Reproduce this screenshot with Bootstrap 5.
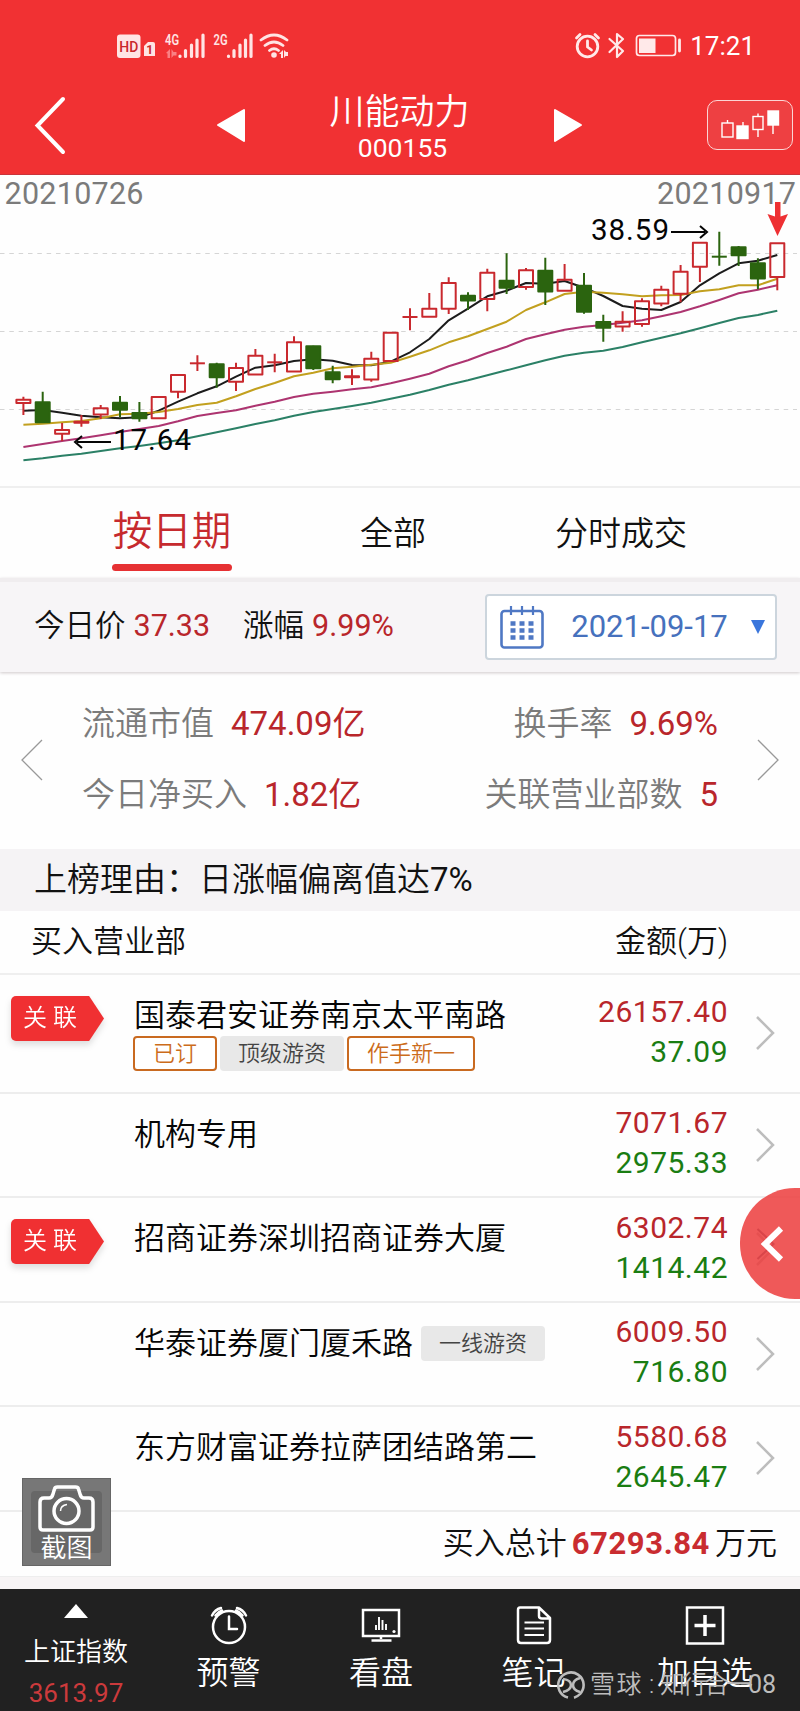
<!DOCTYPE html>
<html lang="zh-CN">
<head>
<meta charset="utf-8">
<meta name="viewport" content="width=device-width, initial-scale=1">
<title>川能动力 000155</title>
<link href="https://cdn.jsdelivr.net/npm/bootstrap@5.3.0/dist/css/bootstrap.min.css" rel="stylesheet">
<style>
  body { width: 800px; height: 1711px; overflow: hidden; background: #fefefe; color: #111; font-family: Roboto, "Noto Sans CJK SC", sans-serif; font-weight: 350; }
  svg { display: block; flex: none; }
  .up, .down, .num { font-weight: 400; }
  .up { color: #b9262b; } .down { color: #1a7d12; } .soft { color: #7b7b7b; }
  .top-area { height: 175px; background: #f13133; color: #fff; border-bottom: 1px solid #c9343a; }
  .status-line { height: 84px; padding: 32px 45px 0 116px; }
  .clock { font-size: 26px; line-height: 28px; }
  .title-line { height: 82px; padding: 0 7px 0 34px; }
  .stock-name { font-size: 35px; line-height: 40px; padding-top: 5px; }
  .stock-code { font-size: 26.5px; line-height: 28px; padding: 1px 0 0 6px; }
  .kline-btn { width: 86px; height: 50px; border: 1.5px solid #fbd5d5; border-radius: 10px; background: #ee4042; }
  .chart-area { height: 313px; border-bottom: 2px solid #efefef; }
  .tab-line { height: 90px; padding-left: 61px; font-size: 33px; }
  .tab-line .nav-link { color: #111; padding: 0; height: 90px; line-height: 91px; text-align: center; }
  .tab-line .nav-link.active { color: #c62a2e; font-size: 39.5px; line-height: 88px; position: relative; }
  .tab-line .active::after { content: ""; position: absolute; left: 51px; bottom: 7px; width: 120px; height: 7px; border-radius: 4px; background: #e63133; }
  .price-strip { height: 94px; padding: 0 23px 0 34px; background: #f7f5f7; border-top: 4px solid #f0edef; font-size: 30.5px; box-shadow: 0 1px 3px #cfc9cb; position: relative; }
  .strip-text { padding-bottom: 2px; }
  .date-box { width: 292px; height: 66px; border: 2px solid #ccd5dd; border-radius: 4px; background: #fff; color: #4671bd; padding: 0 10px 0 13px; font-size: 31px; }
  .stat-area { height: 177px; padding: 0 21px 2px; font-size: 33px; }
  .stat-row { height: 71px; }
  .reason-line { height: 62px; line-height: 61px; padding-left: 34px; background: #f5f3f5; font-size: 33px; }
  .head-line { height: 64px; padding: 0 72px 0 31px; font-size: 31px; border-bottom: 2px solid #efefef; }
  .seat { height: 104.5px; border-bottom: 2px solid #ededed; font-size: 31px; }
  .seat.tall { height: 118.5px; }
  .seat .badge-col { width: 134px; padding: 21px 0 0 11px; align-self: flex-start; flex: none; }
  .rel { filter: drop-shadow(0 4px 3px #ddd); }
  .rel-shape { width: 93px; height: 45px; line-height: 44px; padding-left: 12px; border-radius: 5px; background: #f03032; color: #fff; font-size: 24px; letter-spacing: 6px; clip-path: polygon(0 0, 84% 0, 100% 50%, 84% 100%, 0 100%); }
  .seat-name { align-self: flex-start; padding-top: 21px; line-height: 40px; color: #060606; white-space: nowrap; }
  .tag { display: inline-block; height: 35px; line-height: 32px; border-radius: 4px; font-size: 22px; text-align: center; color: #444; background: #e8e8e8; border: 2px solid #e8e8e8; }
  .tag.o { color: #cc6c1b; background: #fff; border-color: #c96a20; }
  .w2 { width: 84px; } .w4 { width: 124px; } .w5 { width: 128px; }
  .money { line-height: 40px; font-size: 30px; letter-spacing: .5px; padding-bottom: 3px; }
  .seat .go { margin: 0 25px 0 27px; }
  .total-line { height: 65px; padding: 2px 23px 0 0; font-size: 31px; border-bottom: 1px solid #eee; }
  .total-line b { font-size: 31px; font-weight: 700; color: #c92c30; margin: 0 5px; letter-spacing: .6px; }
  .gap-line { height: 12px; background: #f7f4f5; }
  .foot-area { height: 122px; background: #212121; color: #fff; }
  .foot-item { height: 122px; font-size: 32px; line-height: 36px; }
  .float-more { position: absolute; left: 740px; top: 1188px; width: 60px; height: 111px; border-radius: 55px 0 0 55px; background: rgba(236,62,62,.86); }
  .shot { position: absolute; left: 22px; top: 1478px; width: 89px; height: 88px; background: #777; color: #fff; font-size: 26px; line-height: 30px; border: 1px solid #666; }
  .mark-line { position: absolute; left: 556px; top: 1668px; font-size: 25px; line-height: 34px; color: #bdbdbd; white-space: nowrap; }
</style>
</head>
<body>
<header class="top-area">
  <div class="status-line d-flex">
    <svg width="176" height="28" viewBox="116 32 176 28" fill="#ffe4e4">
      <rect x="117" y="34.500" width="23.500" height="23.500" rx="3"/>
      <text x="128.800" y="51.800" font-size="15" font-weight="500" text-anchor="middle" textLength="19" lengthAdjust="spacingAndGlyphs" fill="#c9282c" font-family="Roboto">HD</text>
      <path d="M144 46l4-4h5q2 0 2 2v12H144z"/>
      <text x="149.800" y="54" font-size="12" font-weight="700" text-anchor="middle" fill="#c9282c" font-family="Roboto">1</text>
      <g font-family="Roboto" font-size="15" font-weight="600"><text x="165" y="44.500" textLength="14" lengthAdjust="spacingAndGlyphs">4G</text><text x="213.500" y="44.500" textLength="14" lengthAdjust="spacingAndGlyphs">2G</text></g>
      <path fill="#fa8083" d="M166 53l4-4v9h-2.500v-4.500zM171.500 49v9l2-2.500h3v-3.500h-3z"/>
      <g stroke="#ffe4e4" stroke-width="3.200" stroke-linecap="round"><path d="M180 56v.5M185.500 50.500v6M191.500 45v11.500M197 40v16.500M203 35v21.500M228.500 56v.5M234 50.500v6M240 45v11.500M245.500 40v16.500M251 35v21.500"/></g>
      <g fill="none" stroke="#ffe4e4" stroke-width="2.800" stroke-linecap="round"><path d="M261 40q13-10 26 0M265 45.500q9-7 18 0M269.500 50.500q4.500-3.500 9 0"/></g>
      <circle cx="274" cy="55" r="2.800"/><path d="M279 54l4-4v8h-2v-4zM284 50v8l1.500-2h2.500v-4h-2z"/>
    </svg>
    <svg class="ms-auto me-2" width="108" height="28" viewBox="575 32 108 28" fill="none" stroke="#ffe9e9" stroke-width="2.800" stroke-linecap="round" stroke-linejoin="round">
      <circle cx="588.500" cy="46.500" r="10.300"/><path d="M588.500 41v6l4 3M577.500 38l3.500-3.500M599.500 38l-3.500-3.500"/>
      <path stroke-width="2.200" d="M610.500 39l13.500 12-6 6V34l6 5-13.500 13"/>
      <rect x="637.500" y="35.500" width="39" height="20" rx="3" stroke-width="1.700"/><rect x="640" y="38.500" width="16.500" height="14.500" fill="#ffe9e9" stroke="none"/><path d="M680.500 40v11"/>
    </svg>
    <div class="clock num">17:21</div>
  </div>
  <div class="title-line d-flex align-items-center">
    <svg width="34" height="60" viewBox="0 0 34 60"><path d="M29 4L3.500 30.500 29 57" fill="none" stroke="#fff" stroke-width="4" stroke-linecap="round"/></svg>
    <svg style="margin-left:148px" width="32" height="36" viewBox="0 0 32 36"><path d="M2 18L28 3v31z" fill="#fff" stroke="#fff" stroke-width="2" stroke-linejoin="round"/></svg>
    <div class="flex-fill text-center">
      <div class="stock-name">川能动力</div>
      <div class="stock-code num">000155</div>
    </div>
    <svg style="margin-right:124px" width="32" height="36" viewBox="0 0 32 36"><path d="M30 18L4 3v31z" fill="#fff" stroke="#fff" stroke-width="2" stroke-linejoin="round"/></svg>
    <div class="kline-btn">
      <svg width="84" height="48" viewBox="708 102 84 48" fill="none" stroke="#fff" stroke-width="1.400"><rect x="722" y="124" width="11" height="14"/><path d="M727.500 121v3M743 123v4M758 114.500v3M758 131v7M773 126v9"/><rect x="737" y="127" width="11" height="12.500" fill="#fff"/><rect x="753" y="117.500" width="10" height="13"/><rect x="768" y="112" width="10.500" height="14" fill="#fff"/></svg>
    </div>
  </div>
</header>

<section class="chart-area">
  <svg id="chart" width="800" height="311" viewBox="0 0 800 311" font-family="Roboto" font-weight="400">
    <path stroke="#d5d5d5" stroke-width="1.200" stroke-dasharray="4.500 4.830" d="M0 78.500H797M0 156.500H797M0 234.500H797"/>
    <g fill="#7b7b7b" font-size="30.500"><text x="4.500" y="29" textLength="139">20210726</text><text x="657" y="29" textLength="139">20210917</text></g>
    <g id="averages" fill="none" stroke-width="2" stroke-linejoin="round"></g>
    <g id="candles" stroke-width="2"></g>
    <g fill="#050505" font-size="29.500"><text x="113" y="275" textLength="78">17.64</text><text x="591" y="65" textLength="78">38.59</text></g>
    <path fill="none" stroke="#050505" stroke-width="2" d="M111 267H77M82 261l-7 6 7 6M671 57h34M700 51l7 6-7 6"/>
    <path fill="#ee3033" d="M775 27h5.500v14.500L788 39l-10.500 22L767.500 39l7.500 2.500z"/>
  </svg>
</section>

<nav class="nav tab-line">
  <a class="nav-link active" style="width:222px">按日期</a>
  <a class="nav-link" style="width:220px">全部</a>
  <a class="nav-link" style="width:236px">分时成交</a>
</nav>

<section class="price-strip d-flex align-items-center">
  <div class="strip-text d-flex"><span>今日价</span><span class="up ms-2">37.33</span>
  <span style="margin-left:33px">涨幅</span><span class="up ms-2">9.99%</span></div>
  <div class="date-box d-flex align-items-center ms-auto">
    <svg width="44" height="44" viewBox="0 0 44 44" fill="none" stroke="#4f78c4" stroke-width="2.600"><rect x="1.500" y="6" width="41" height="36.500" rx="3"/><path stroke-width="2.200" d="M11 1v9M22 1v9M33 1v9"/><path stroke-width="4.500" stroke-dasharray="5 4" d="M10.500 18.500h23M10.500 25.500h23M10.500 32.500h23"/></svg>
    <span class="flex-fill text-center ps-1 num">2021-09-17</span>
    <svg width="14" height="16" viewBox="0 0 14 16"><path d="M0 1h14L7 15z" fill="#3a76dc"/></svg>
  </div>
</section>

<section class="stat-area d-flex align-items-center">
  <svg width="22" height="42" viewBox="0 0 22 42"><path d="M21 1L1 21l20 20" fill="none" stroke="#999" stroke-width="1.300"/></svg>
  <div class="flex-fill" style="padding:0 39px">
    <div class="stat-row d-flex align-items-center"><span class="soft">流通市值</span><span class="up" style="margin-left:17px">474.09亿</span><span class="soft ms-auto">换手率</span><span class="up" style="margin-left:17px">9.69%</span></div>
    <div class="stat-row d-flex align-items-center"><span class="soft">今日净买入</span><span class="up" style="margin-left:17px">1.82亿</span><span class="soft ms-auto">关联营业部数</span><span class="up" style="margin-left:17px">5</span></div>
  </div>
  <svg width="22" height="42" viewBox="0 0 22 42"><path d="M1 1l20 20L1 41" fill="none" stroke="#999" stroke-width="1.300"/></svg>
</section>

<div class="reason-line">上榜理由：日涨幅偏离值达<span class="num">7%</span></div>
<div class="head-line d-flex align-items-center justify-content-between"><span>买入营业部</span><span>金额(万)</span></div>

<main>
  <div class="seat tall d-flex align-items-center">
    <div class="badge-col"><div class="rel"><div class="rel-shape">关联</div></div></div>
    <div class="seat-name">国泰君安证券南京太平南路<div class="d-flex" style="gap:3px;margin-left:-1px"><span class="tag o w2">已订</span><span class="tag w4">顶级游资</span><span class="tag o w5">作手新一</span></div></div>
    <div class="money ms-auto text-end"><div class="up">26157.40</div><div class="down">37.09</div></div>
    <svg class="go" width="20" height="36" viewBox="0 0 20 36"><path d="M2 2l16 16L2 34" fill="none" stroke="#bdbdbd" stroke-width="2.500"/></svg>
  </div>
  <div class="seat d-flex align-items-center">
    <div class="badge-col"></div>
    <div class="seat-name">机构专用</div>
    <div class="money ms-auto text-end"><div class="up">7071.67</div><div class="down">2975.33</div></div>
    <svg class="go" width="20" height="36" viewBox="0 0 20 36"><path d="M2 2l16 16L2 34" fill="none" stroke="#bdbdbd" stroke-width="2.500"/></svg>
  </div>
  <div class="seat d-flex align-items-center">
    <div class="badge-col"><div class="rel"><div class="rel-shape">关联</div></div></div>
    <div class="seat-name">招商证券深圳招商证券大厦</div>
    <div class="money ms-auto text-end"><div class="up">6302.74</div><div class="down">1414.42</div></div>
    <svg class="go" width="20" height="36" viewBox="0 0 20 36"><path d="M2 2l16 16L2 34" fill="none" stroke="#bdbdbd" stroke-width="2.500"/></svg>
  </div>
  <div class="seat d-flex align-items-center">
    <div class="badge-col"></div>
    <div class="seat-name d-flex align-items-center">华泰证券厦门厦禾路<span class="tag w4" style="margin-left:8px">一线游资</span></div>
    <div class="money ms-auto text-end"><div class="up">6009.50</div><div class="down">716.80</div></div>
    <svg class="go" width="20" height="36" viewBox="0 0 20 36"><path d="M2 2l16 16L2 34" fill="none" stroke="#bdbdbd" stroke-width="2.500"/></svg>
  </div>
  <div class="seat d-flex align-items-center">
    <div class="badge-col"></div>
    <div class="seat-name">东方财富证券拉萨团结路第二</div>
    <div class="money ms-auto text-end"><div class="up">5580.68</div><div class="down">2645.47</div></div>
    <svg class="go" width="20" height="36" viewBox="0 0 20 36"><path d="M2 2l16 16L2 34" fill="none" stroke="#bdbdbd" stroke-width="2.500"/></svg>
  </div>
  <div class="total-line d-flex align-items-center justify-content-end"><span>买入总计</span><b>67293.84</b><span>万元</span></div>
  <div class="gap-line"></div>
</main>

<footer class="foot-area d-flex">
  <div class="foot-item d-flex flex-column align-items-center" style="width:152px;font-size:26px;padding-top:14px">
    <svg width="24" height="16" viewBox="0 0 24 16"><path d="M12 1L0 15h24z" fill="#fff"/></svg>
    <div style="margin-top:15px">上证指数</div><div class="num" style="color:#cc3a3c;margin-top:5px">3613.97</div>
  </div>
  <div class="foot-item d-flex flex-column align-items-center" style="width:153px;padding-top:16px">
    <svg width="40" height="40" viewBox="0 0 40 40" fill="none" stroke="#fff" stroke-width="2.500" stroke-linecap="round"><circle cx="20" cy="22" r="16"/><path d="M20 11.500V24h8M3 10.500Q6 4.500 12 3M6.500 10.500Q9 7 13 5.500M37 10.500Q34 4.500 28 3M33.500 10.500Q31 7 27 5.500" /></svg>
    <div style="margin-top:10px">预警</div>
  </div>
  <div class="foot-item d-flex flex-column align-items-center" style="width:152px;padding-top:16px">
    <svg width="40" height="40" viewBox="0 0 40 40" fill="none" stroke="#fff" stroke-width="2.500"><rect x="2" y="5" width="36" height="26"/><path d="M20 31v3M10.500 35.500h20"/><path stroke-width="1.900" d="M15 20v5M18 12v13M21.500 15v10M25 19v6"/><circle cx="33" cy="26.500" r="1.600" fill="#fff" stroke="none"/></svg>
    <div style="margin-top:10px">看盘</div>
  </div>
  <div class="foot-item d-flex flex-column align-items-center" style="width:153px;padding-top:16px">
    <svg width="40" height="40" viewBox="0 0 40 40" fill="none" stroke="#fff" stroke-width="2.500" stroke-linejoin="round"><path d="M6 2.500h19L36 13v22q0 3-3 3H7q-3 0-3-3V5q0-2.500 2-2.500zM25 3v8q0 2.500 3 2.500h8"/><path stroke-width="2" d="M10.500 17.500H30M10.500 23.500H30M10.500 30H30"/></svg>
    <div style="margin-top:10px">笔记</div>
  </div>
  <div class="foot-item d-flex flex-column align-items-center" style="width:190px;padding-top:16px">
    <svg width="40" height="40" viewBox="0 0 40 40" fill="none" stroke="#fff" stroke-width="2.500"><rect x="2" y="2.500" width="36" height="36"/><path stroke-width="3.500" d="M20 10v21M9.500 20.500h21"/></svg>
    <div style="margin-top:10px">加自选</div>
  </div>
</footer>

<button class="btn p-0 border-0 float-more" type="button"><svg width="60" height="111" viewBox="0 0 60 111"><path d="M17.500 41l16 15-16 15" fill="none" stroke="#d94549" stroke-width="2"/><path d="M41 40.500L25 56l16 15.500" fill="none" stroke="#fff" stroke-width="6"/></svg></button>

<div class="shot text-center">
  <svg width="87" height="54" viewBox="23 1479 87 54" overflow="visible" fill="none" stroke="#fff" stroke-width="3.500"><rect x="31" y="1491" width="71" height="62" rx="4" fill="#676767" stroke="none"/><path stroke-linejoin="round" d="M44 1498h5q3 0 4-4l1.500-5q.5-2 3-2h18q2.500 0 3 2l1.500 5q1 4 4 4h5q4 0 4 4v25q0 3-3 3H43q-3 0-3-3v-25q0-4 4-4z"/><circle cx="66.500" cy="1511" r="12.500"/><path stroke-width="1.500" d="M60.500 1511q0-5.500 6.500-6.500"/></svg>
  <div class="position-relative">截图</div>
</div>

<div class="mark-line d-flex align-items-center">
  <svg width="30" height="30" viewBox="0 0 30 30" fill="none" stroke="#bdbdbd" stroke-width="2.600"><path d="M12 27.500A12.700 12.700 0 1 1 24 24M18 27.700A12.700 12.700 0 0 0 24 24M7 9q8 1 8 6t-8 7M24 8q-7 2-7 7t7 7"/></svg>
  <span style="margin-left:4px;letter-spacing:1.500px">雪球</span><span style="width:17px;text-align:center">:</span><span style="letter-spacing:-3px">知行合一</span><span class="num">08</span>
</div>

<script>
  // each candle: [colour, high, body top, body bottom, low], three units to a pixel
  const candles = [
    ['r',665,674,684,720],['g',650,682,742,744],['r',744,765,776,798],['r',720,740,743,755],['r',690,700,719,732],
    ['g',663,683,704,727],['g',681,714,730,740],['r',666,666,730,730],['r',600,600,650,670],['r',541,565,565,588],
    ['g',563,568,607,638],['r',563,579,620,648],['r',522,542,598,598],['r',536,562,562,592],['r',484,502,590,590],
    ['g',512,514,580,585],['g',572,592,613,625],['r',583,604,607,630],['r',530,551,613,620],['r',473,473,558,558],
    ['r',400,426,426,466],['r',354,401,425,425],['r',307,324,401,417],['g',352,362,376,405],['r',281,293,372,409],
    ['g',235,317,338,357],['r',279,286,336,344],['g',248,287,349,390],['r',267,314,347,347],['g',294,332,410,416],
    ['g',419,441,458,500],['r',409,440,454,470],['r',370,379,447,455],['r',332,344,385,394],['r',270,290,356,382],
    ['r',203,203,275,321],['g',170,245,245,272],['g',213,217,241,273],['g',250,265,311,343],['r',205,205,306,346]];
  const averages = {
    '#1c1c1c': [707,705,713,722,727,730,727,707,680,655,634,605,578,571,558,553,557,570,571,560,532,492,436,401,364,347,324,326,318,338,363,393,401,405,381,331,295,265,257,240],
    '#c2a01f': [749,746,742,738,730,718,716,711,702,690,683,664,642,624,604,593,580,575,569,563,545,526,502,484,462,440,405,382,357,350,353,358,364,361,360,349,343,331,331,311],
    '#ad3470': [816,807,798,790,781,771,762,753,739,723,714,706,692,680,666,656,650,643,637,625,611,596,574,556,534,515,492,478,464,455,450,443,436,424,411,394,375,355,344,331],
    '#2b8066': [856,850,842,836,828,820,813,805,796,784,772,760,747,736,722,711,702,693,683,671,659,645,629,616,601,586,571,556,542,533,527,516,502,488,475,460,444,429,420,407]
  };
  const x = i => (23.4 + i * 19.33).toFixed(1), y = v => (v / 3).toFixed(1);
  document.getElementById('averages').innerHTML = Object.entries(averages).map(([c, a]) =>
    `<polyline stroke="${c}" points="${a.map((v, i) => x(i) + ',' + y(v)).join(' ')}"/>`).join('');
  document.getElementById('candles').innerHTML = candles.map(([k, h, t, b, l], i) => {
    const c = k === 'r' ? '#c9292e' : '#2b640f', fill = k === 'r' ? 'none' : c;
    // a session that opens and closes at one price is a single bar
    const body = t === b
      ? `<path stroke="${c}" d="M${x(i) - 7.5} ${y(t)}h15"/>`
      : `<rect x="${x(i) - 7}" y="${y(t)}" width="14" height="${y(b - t)}" fill="${fill}" stroke="${c}" stroke-linejoin="round"/>`;
    return `<path stroke="${c}" d="M${x(i)} ${y(h)}V${y(t)}M${x(i)} ${y(b)}V${y(l)}"/>` + body;
  }).join('');
</script>
<script src="https://cdn.jsdelivr.net/npm/bootstrap@5.3.0/dist/js/bootstrap.bundle.min.js"></script>
</body>
</html>
